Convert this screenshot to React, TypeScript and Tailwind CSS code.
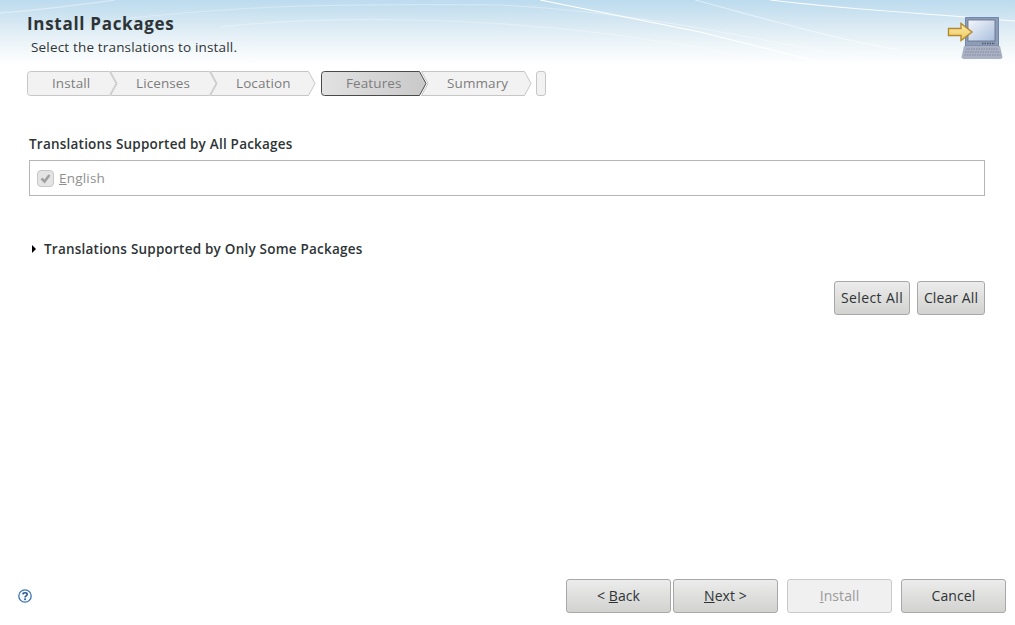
import type { ReactNode } from 'react';

const font = { fontFamily: '"Open Sans", "Noto Sans", sans-serif' };

function HeaderArt() {
  return (
    <svg className="absolute inset-0 h-full w-full" viewBox="0 0 1015 65" preserveAspectRatio="none">
      <defs>
        <linearGradient id="sky" x1="0" y1="0" x2="0" y2="1">
          <stop offset="0" stopColor="#bcdbee" />
          <stop offset="0.35" stopColor="#d6e8f3" />
          <stop offset="0.7" stopColor="#eff6f9" />
          <stop offset="1" stopColor="#ffffff" />
        </linearGradient>
      </defs>
      <rect width="1015" height="65" fill="url(#sky)" />
      <path d="M0 13C50 9 85 4 115 0" stroke="#fff" strokeOpacity="0.35" strokeWidth="1.5" fill="none" />
      <path d="M130 18C230 8 300 3 500 5C640 12 760 40 880 62" stroke="#fff" strokeOpacity="0.3" strokeWidth="1.2" fill="none" />
      <path d="M220 27C330 15 480 18 610 34C680 44 740 54 790 65" stroke="#fff" strokeOpacity="0.3" strokeWidth="1.2" fill="none" />
      <path d="M540 0L700 32L820 62" stroke="#fff" strokeWidth="1.1" fill="none" />
      <path d="M695 0C770 20 830 38 900 50" stroke="#fff" strokeOpacity="0.45" strokeWidth="1.2" fill="none" />
      <path d="M770 0C860 11 940 14 1015 21" stroke="#fff" strokeOpacity="0.9" strokeWidth="1.1" fill="none" />
    </svg>
  );
}

function InstallIcon() {
  return (
    <svg width="56" height="44" viewBox="0 0 56 44" className="shrink-0">
      <defs>
        <linearGradient id="screen" x1="0" y1="0" x2="1" y2="1">
          <stop offset="0" stopColor="#f4f6fc" />
          <stop offset="1" stopColor="#a9bfdc" />
        </linearGradient>
        <linearGradient id="arrow" x1="0" y1="0" x2="0" y2="1">
          <stop offset="0" stopColor="#fdeeb0" />
          <stop offset="1" stopColor="#eec65a" />
        </linearGradient>
      </defs>
      <path d="M18.500 .5H51.500V29H18.500Z" fill="#8f9cb4" stroke="#6d88b4" />
      <rect x="21" y="3" width="27" height="21" fill="url(#screen)" stroke="#5d6f90" strokeWidth="0.8" />
      <path d="M35 26.500H48" stroke="#4f5a70" strokeWidth="1.400" strokeDasharray="1.500 1" />
      <path d="M17 29H53L55.500 40Q55.500 42 53 42H17Q14.500 42 14.500 40Z" fill="#aab1c2" />
      <path d="M19 32H51M18 35H52.500M17.500 38H53.500" stroke="#7f899f" strokeWidth="1.200" strokeDasharray="1.500 1" />
      <path d="M1.500 11.500H14V6.500L25 15L14 23.500V18.500H1.500Z" fill="url(#arrow)" stroke="#b58a2c" strokeWidth="1.400" />
    </svg>
  );
}

function Step({ label, active, width, textLeft, first }: { label: string; active?: boolean; width: number; textLeft: number; first?: boolean }) {
  const w = width;
  const h = 25;
  const path = first || active
    ? `M3.500 .5H${w - 7.5}L${w - 1} 12.500L${w - 7.5} 24.500H3.500Q.5 24.500 .5 21.500V3.500Q.5 .5 3.500 .5Z`
    : `M.5 .5H${w - 7.5}L${w - 1} 12.500L${w - 7.5} 24.500H.5L7 12.500Z`;
  return (
    <div className="relative h-[25px] shrink-0 text-[13.500px] tracking-[.1px] text-[#7d7d7d]" style={{ width: w }}>
      <svg className="absolute inset-0" width={w} height={h}>
        <defs>
          <linearGradient id="activeStep" x1="0" y1="0" x2="1" y2="0">
            <stop offset="0" stopColor="#e2e2e2" />
            <stop offset="1" stopColor="#c9c9c9" />
          </linearGradient>
        </defs>
        <path d={path} fill={active ? 'url(#activeStep)' : '#f2f2f2'} stroke={active ? '#4a4a4a' : '#c6c6c6'} />
      </svg>
      <span className="absolute top-[2px] whitespace-nowrap" style={{ left: textLeft }}>{label}</span>
    </div>
  );
}

function WizardButton({ children, className, disabled }: { children: ReactNode; className: string; disabled?: boolean }) {
  return (
    <button
      disabled={disabled}
      className={`flex h-[34px] items-center justify-center rounded-[3px] border pb-[2px] text-[14px] tracking-[.1px] ${
        disabled
          ? 'border-[#c9c9c9] bg-[#f0f0f0] text-[#9a9a9a]'
          : 'border-[#a8a8a8] bg-gradient-to-b from-[#ececec] to-[#d2d2d0] text-[#2e3436]'
      } ${className}`}
    >
      <span>{children}</span>
    </button>
  );
}

function HelpIcon() {
  return (
    <svg width="16" height="16" viewBox="0 0 16 16">
      <circle cx="8" cy="8" r="6.200" fill="#f5f8fd" stroke="#3c74b4" strokeWidth="1.300" />
      <path d="M5.900 6.400C6 4.200 10.200 4.200 10.200 6.400C10.200 7.900 8 7.800 8 9.500" fill="none" stroke="#28568f" strokeWidth="1.500" />
      <rect x="7.200" y="10.400" width="1.700" height="1.700" fill="#28568f" />
    </svg>
  );
}

export default function App() {
  return (
    <div className="flex h-[625px] w-[1015px] flex-col overflow-hidden bg-white text-[#2e3436]" style={font}>
      {/* Bandeau du titre */}
      <header className="relative h-[65px] shrink-0">
        <HeaderArt />
        <div className="relative flex h-full items-start justify-between pl-[27px] pr-[12px]">
          <div>
            <h1 className="mt-[13px] text-[17px] font-bold leading-[22px] tracking-[.7px]">Install Packages</h1>
            <p className="ml-[4px] mt-[3px] text-[13.500px] leading-[18px] tracking-[.17px]">Select the translations to install.</p>
          </div>
          <div className="mt-[17px]">
            <InstallIcon />
          </div>
        </div>
      </header>

      {/* Etapes */}
      <nav className="ml-[27px] mt-[6px] flex h-[25px] items-center">
        <Step label="Install" width={90} textLeft={25} first />
        <div className="-ml-[7px]"><Step label="Licenses" width={107} textLeft={26} /></div>
        <div className="-ml-[7px]"><Step label="Location" width={106} textLeft={26} /></div>
        <div className="ml-[5px]"><Step label="Features" width={106} textLeft={25} active /></div>
        <div className="-ml-[6px]"><Step label="Summary" width={111} textLeft={26} /></div>
        <div className="ml-[4px] h-[25px] w-[10px] rounded-[3px] border border-[#c6c6c6] bg-[#f2f2f2]" />
      </nav>

      {/* Contenu */}
      <main className="flex-1 pl-[29px] pr-[30px] pt-[38px]">
        <h2 className="text-[13.500px] font-semibold leading-[20px] tracking-[.22px]">Translations Supported by All Packages</h2>
        <div className="mt-[6px] flex h-[36px] items-center border border-[#b5b5b5] pl-[7px] text-[13.500px] tracking-[.2px] text-[#8f8f8f]">
          <span className="flex h-[17px] w-[17px] items-center justify-center rounded-[4px] border border-[#c6c6c6] bg-[#e4e4e4]">
            <svg width="13" height="13" viewBox="0 0 13 13">
              <path d="M2.500 6.500L5.500 9.500L10.500 3" fill="none" stroke="#a0a0a0" strokeWidth="2.600" />
            </svg>
          </span>
          <span className="ml-[5px] pt-[1px]"><u>E</u>nglish</span>
        </div>
        <div className="mt-[43px] flex items-center">
          <span className="ml-[3px] h-0 w-0 border-y-[4px] border-l-[4px] border-y-transparent border-l-black" />
          <h2 className="ml-[8px] text-[13.500px] font-semibold leading-[20px] tracking-[.22px]">Translations Supported by Only Some Packages</h2>
        </div>
        <div className="mt-[22px] flex justify-end gap-[7px]">
          <WizardButton className="w-[76px] tracking-[.4px]">Select All</WizardButton>
          <WizardButton className="w-[68px]">Clear All</WizardButton>
        </div>
      </main>

      {/* Pied de page */}
      <footer className="flex items-center justify-between pb-[12px] pl-[17px] pr-[9px]">
        <HelpIcon />
        <div className="flex">
          <WizardButton className="w-[105px]">&lt; <u>B</u>ack</WizardButton>
          <WizardButton className="ml-[2px] w-[105px]"><u>N</u>ext &gt;</WizardButton>
          <WizardButton className="ml-[9px] w-[105px]" disabled><u>I</u>nstall</WizardButton>
          <WizardButton className="ml-[9px] w-[105px]">Cancel</WizardButton>
        </div>
      </footer>
    </div>
  );
}
